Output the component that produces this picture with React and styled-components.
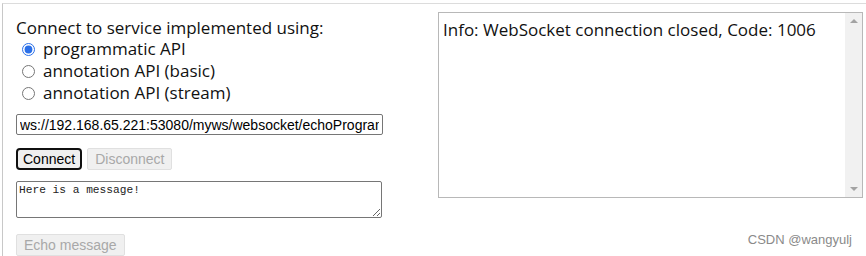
import React from 'react'
import styled, { createGlobalStyle } from 'styled-components'

const GlobalStyle = createGlobalStyle`
  html, body {
    margin: 0;
    padding: 0;
    background: #ffffff;
  }
`

const Frame = styled.div`
  position: relative;
  width: 866px;
  height: 256px;
  overflow: hidden;
  box-sizing: border-box;
  padding-top: 3px;
`

const Page = styled.div`
  display: flex;
  height: 253px;
  box-sizing: border-box;
  border-top: 1px solid #dcdcdc;
  margin-left: 2px;
  border-left: 1px solid #c8c8c8;
  padding: 8px 0 0 13px;
`

const Controls = styled.div`
  width: 367px;
  display: flex;
  flex-direction: column;
`

const Heading = styled.div`
  font-family: 'Open Sans', sans-serif;
  font-size: 17px;
  color: #111;
  line-height: 22px;
  margin-top: 5px;
`

const RadioRow = styled.label`
  display: flex;
  align-items: center;
  font-family: 'Open Sans', sans-serif;
  font-size: 17px;
  color: #111;
  line-height: 22px;
  height: 22px;
  margin-top: ${p => (p.first ? '-1px' : '0')};
`

const Radio = styled.input`
  width: 13px;
  height: 13px;
  margin: 0 8px 0 6px;
  accent-color: #2a6fe8;
`

const UrlInput = styled.input`
  margin-top: 10px;
  width: 367px;
  height: 21px;
  box-sizing: border-box;
  border: 1px solid #767676;
  border-radius: 2px;
  padding: 1px 3px;
  font-family: 'Liberation Sans', Arial, sans-serif;
  font-size: 14px;
  color: #000;
`

const ButtonRow = styled.div`
  display: flex;
  gap: 5px;
  margin-top: 13px;
`

const Button = styled.button`
  height: 22px;
  box-sizing: border-box;
  padding: 0 ${p => (p.focused ? '5px' : '7px')};
  font-family: 'Liberation Sans', Arial, sans-serif;
  font-size: 14px;
  background: ${p => (p.disabled ? '#f0f0f0' : '#efefef')};
  color: ${p => (p.disabled ? '#a8a8a8' : '#000')};
  border: ${p => (p.focused ? '2px solid #101010' : p.disabled ? '1px solid #e0e0e0' : '1px solid #767676')};
  border-radius: ${p => (p.focused ? '4px' : '2px')};
`

const Message = styled.textarea`
  margin-top: 11px;
  width: 366px;
  height: 37px;
  box-sizing: border-box;
  border: 1px solid #767676;
  border-radius: 2px;
  padding: 2px 2px;
  font-family: 'Liberation Mono', monospace;
  font-size: 11.2px;
  color: #222;
  resize: both;
`

const EchoRow = styled.div`
  margin-top: 16px;
`

const LogBox = styled.div`
  margin-left: 55px;
  margin-top: 0px;
  width: 425px;
  height: 186px;
  box-sizing: border-box;
  border: 1px solid #b8b8b8;
  display: flex;
`

const LogText = styled.div`
  flex: 1;
  padding: 6px 4px;
  font-family: 'Open Sans', sans-serif;
  font-size: 17px;
  line-height: 22px;
  color: #111;
`

const Scrollbar = styled.div`
  width: 17px;
  background: #f1f1f1;
  display: flex;
  flex-direction: column;
  justify-content: space-between;
  align-items: center;
  padding: 6px 0;
`

const Arrow = styled.div`
  width: 0;
  height: 0;
  border-left: 4px solid transparent;
  border-right: 4px solid transparent;
  ${p => (p.down ? 'border-top: 4px solid #a3a3a3;' : 'border-bottom: 4px solid #a3a3a3;')}
`

const Watermark = styled.div`
  position: absolute;
  right: 14px;
  bottom: 9px;
  font-family: 'Liberation Sans', Arial, sans-serif;
  font-size: 13px;
  color: #8a8a8a;
`

export default function App() {
  return (
    <Frame>
      <GlobalStyle />
      <Page>
        <Controls>
          <Heading>Connect to service implemented using:</Heading>
          <RadioRow first><Radio type="radio" name="api" defaultChecked />programmatic API</RadioRow>
          <RadioRow><Radio type="radio" name="api" />annotation API (basic)</RadioRow>
          <RadioRow><Radio type="radio" name="api" />annotation API (stream)</RadioRow>
          <UrlInput defaultValue="ws://192.168.65.221:53080/myws/websocket/echoProgrammatic" />
          <ButtonRow>
            <Button focused>Connect</Button>
            <Button disabled>Disconnect</Button>
          </ButtonRow>
          <Message defaultValue="Here is a message!" />
          <EchoRow>
            <Button disabled>Echo message</Button>
          </EchoRow>
        </Controls>
        <LogBox>
          <LogText>Info: WebSocket connection closed, Code: 1006</LogText>
          <Scrollbar>
            <Arrow />
            <Arrow down />
          </Scrollbar>
        </LogBox>
      </Page>
      <Watermark>CSDN @wangyulj</Watermark>
    </Frame>
  )
}
